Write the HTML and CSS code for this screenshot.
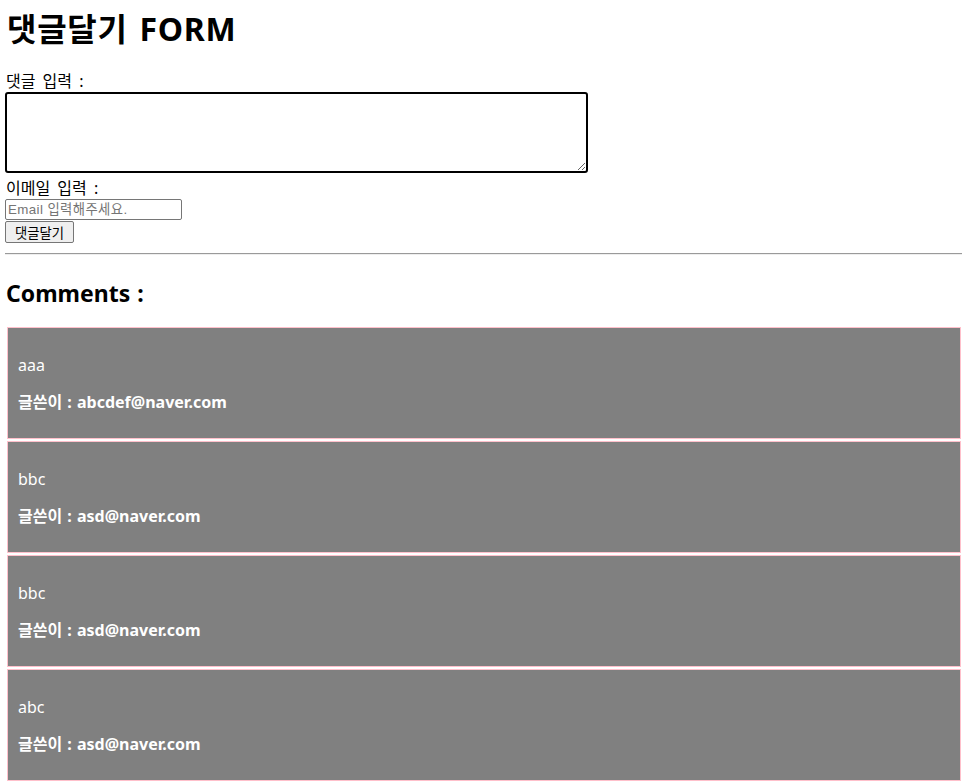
FILE: index.html
```html
<!DOCTYPE html>
<html lang="ko">
<head>
<meta charset="utf-8">
<title>댓글달기 FORM</title>
<link rel="stylesheet" href="styles.css">
</head>
<body>
<h1 class="title">댓글달기 FORM</h1>
<form class="form">
  <label class="label" for="content">댓글 입력 :</label>
  <textarea class="textarea" id="content" autofocus></textarea>
  <label class="label label-email" for="email">이메일 입력 :</label>
  <input class="email" id="email" type="text" placeholder="Email 입력해주세요.">
  <button class="submit" type="button">댓글달기</button>
</form>
<hr class="rule">
<h2 class="comments-title">Comments :</h2>
<div class="comments">
  <div class="comment">
    <p class="comment-text">aaa</p>
    <p class="comment-author">글쓴이 : abcdef@naver.com</p>
  </div>
  <div class="comment">
    <p class="comment-text">bbc</p>
    <p class="comment-author">글쓴이 : asd@naver.com</p>
  </div>
  <div class="comment">
    <p class="comment-text">bbc</p>
    <p class="comment-author">글쓴이 : asd@naver.com</p>
  </div>
  <div class="comment">
    <p class="comment-text">abc</p>
    <p class="comment-author">글쓴이 : asd@naver.com</p>
  </div>
</div>
</body>
</html>
```

FILE: styles.css
```css
html, body {
  margin: 0;
  padding: 0;
}
body {
  padding: 8px 5px 0 5px;
  font-family: "Noto Sans", "Noto Sans CJK KR", sans-serif;
  font-size: 16px;
  color: #000;
  background: #fff;
}
.title {
  margin: 0 0 21px 2px;
  font-size: 32px;
  line-height: 42px;
  font-weight: 700;
  letter-spacing: 0.7px;
  word-spacing: 3px;
}
.form {
  display: flex;
  flex-direction: column;
  align-items: flex-start;
}
.label {
  display: block;
  line-height: 21px;
  font-size: 16px;
  margin-left: 1px;
  word-spacing: 3px;
}
.label-email {
  margin-top: 5px;
}
.textarea {
  display: block;
  box-sizing: border-box;
  width: 583px;
  height: 81px;
  margin: 0;
  border: 2px solid #000;
  border-radius: 3px;
  padding: 2px;
  font-family: "Liberation Mono", monospace;
  font-size: 13px;
  outline: none;
}
.email {
  box-sizing: border-box;
  width: 177px;
  height: 21px;
  margin: 0;
  padding: 1px 2px;
  border: 1px solid #767676;
  border-radius: 2px;
  font-family: "Liberation Sans", "Noto Sans CJK KR", sans-serif;
  font-size: 13.33px;
  letter-spacing: 0.4px;
}
.email::placeholder {
  color: #757575;
}
.submit {
  box-sizing: border-box;
  width: 69px;
  height: 22px;
  margin-top: 1px;
  padding: 1px 6px;
  border: 1px solid #767676;
  border-radius: 2px;
  background: #efefef;
  font-family: "Liberation Sans", "Noto Sans CJK KR", sans-serif;
  font-size: 13.33px;
  color: #000;
}
.rule {
  margin: 10px 0 0 0;
  border: 0;
  border-top: 1px solid #9a9a9a;
  border-bottom: 1px solid #eeeeee;
  height: 0;
}
.comments-title {
  margin: 23px 0 0 1px;
  font-size: 23px;
  line-height: 30px;
  font-weight: 700;
  word-spacing: 1px;
}
.comments {
  margin-top: 19px;
  display: flex;
  flex-direction: column;
  gap: 2px;
}
.comment {
  margin: 0 1px 0 2px;
  padding: 11px 10px 9px 10px;
  border: 1px solid pink;
  background: #808080;
  color: #fff;
}
.comment-text,
.comment-author {
  margin: 16px 0;
  line-height: 21px;
}
.comment-author {
  font-weight: 700;
  word-spacing: 1px;
}
```
